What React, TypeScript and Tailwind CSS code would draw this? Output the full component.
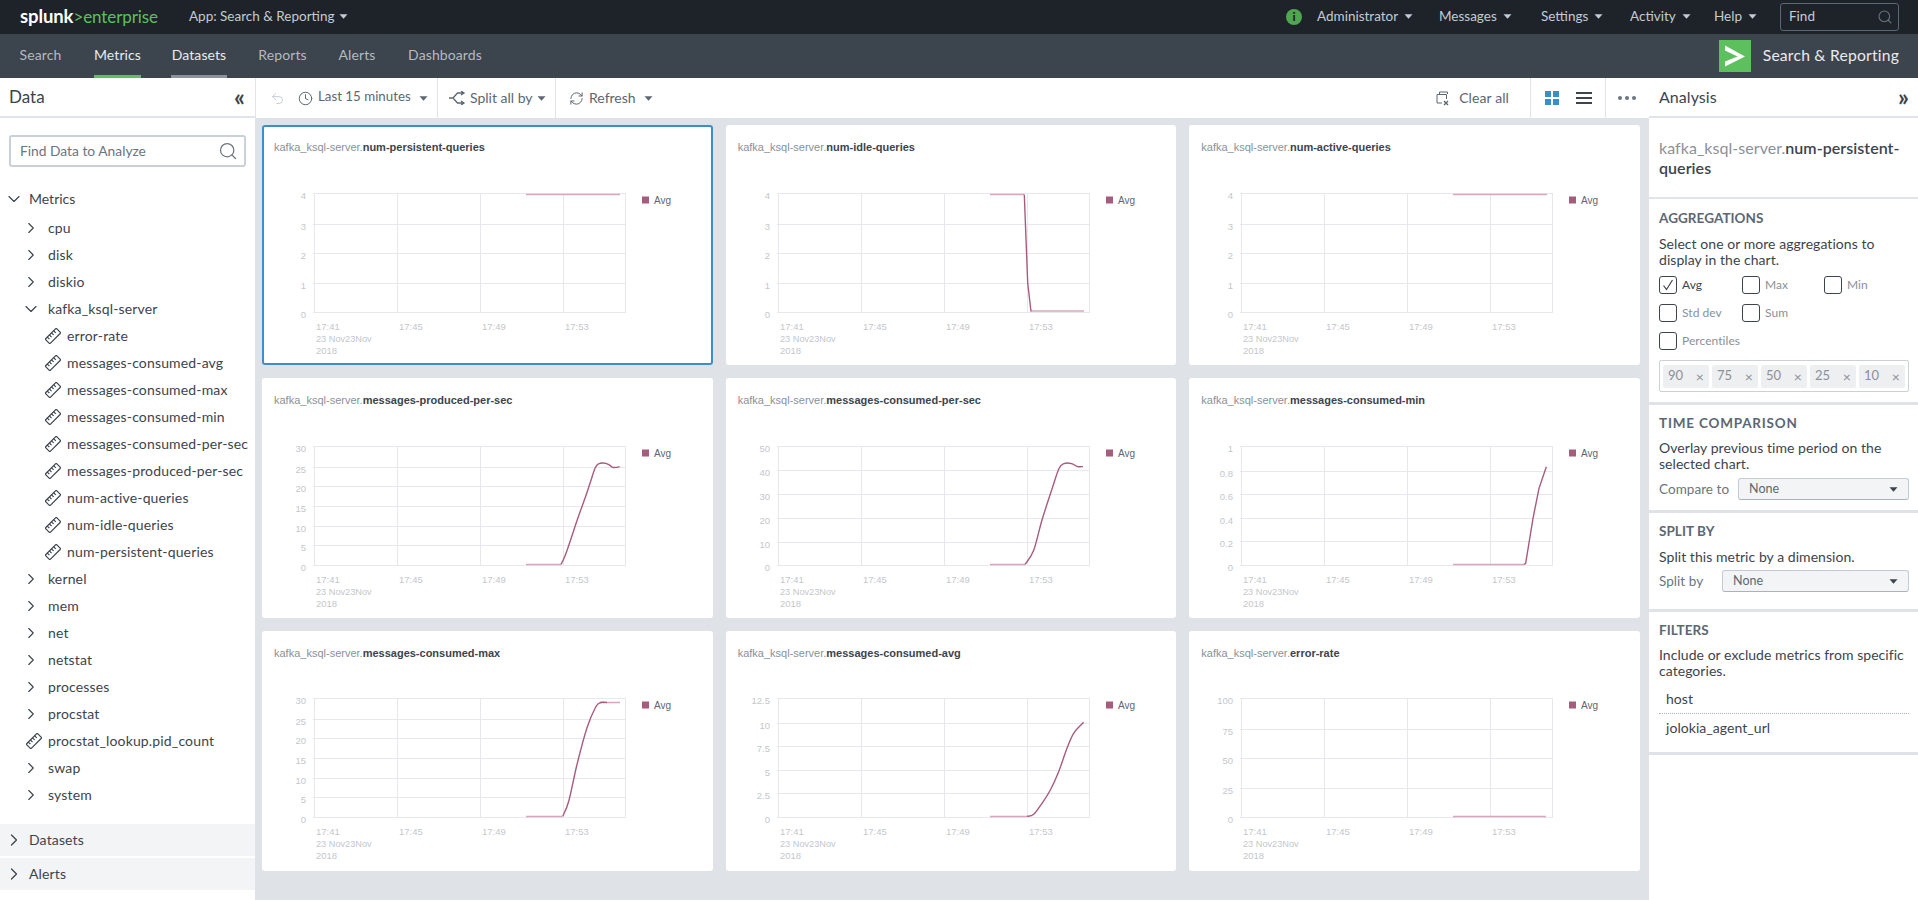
import { ChevronDown, ChevronRight, Clock, RefreshCw, Search, Undo2 } from 'lucide-react';

type Pt = [number, number];

// turn a point list into a soft curve, the charts are spline charts
function smooth(p: Pt[]) {
  let d = `M${p[0][0]} ${p[0][1]}`;
  for (let i = 0; i < p.length - 1; i++) {
    const a = p[Math.max(i - 1, 0)];
    const b = p[i];
    const c = p[i + 1];
    const e = p[Math.min(i + 2, p.length - 1)];
    d += `C${b[0] + (c[0] - a[0]) / 6} ${b[1] + (c[1] - a[1]) / 6} ${c[0] - (e[0] - b[0]) / 6} ${c[1] - (e[1] - b[1]) / 6} ${c[0]} ${c[1]}`;
  }
  return d;
}

const zoomPts = (z: Pt[], ox: number, oy: number): Pt[] => z.map(([x, y]) => [x / 3 + ox, y / 3 + oy]);

const g7a = [68, 89, 108, 128, 148, 167, 187];
const g7b = [67, 88, 107, 127, 147, 166, 186];

const charts = [
  { name: 'num-persistent-queries', labels: ['4', '3', '2', '1', '0'], grid: [68, 99, 128, 158, 187], flat: [[264, 69.5, 358]], selected: true },
  {
    name: 'num-idle-queries', labels: ['4', '3', '2', '1', '0'], grid: [68, 99, 128, 158, 187],
    flat: [[264, 69.5, 298], [305, 186, 358]],
    straight: [[298.3, 69.5], [301.7, 158], [305, 186.5]] as Pt[],
  },
  { name: 'num-active-queries', labels: ['4', '3', '2', '1', '0'], grid: [68, 99, 128, 158, 187], flat: [[264, 69.5, 358]] },
  {
    name: 'messages-produced-per-sec', labels: ['30', '25', '20', '15', '10', '5', '0'], grid: g7a,
    flat: [[264, 186.5, 299]],
    curve: zoomPts([[903, 568], [912, 550], [925, 515], [940, 470], [955, 425], [975, 370], [990, 325], [1005, 280], [1015, 267], [1030, 264], [1045, 268], [1058, 277], [1070, 277], [1079, 275]], -2, -3),
  },
  {
    name: 'messages-consumed-per-sec', labels: ['50', '40', '30', '20', '10', '0'], grid: [68, 92, 116, 140, 164, 187],
    flat: [[264, 186.5, 299]],
    curve: [[299, 186.5], [307.6, 172.5], [316, 142], [326, 111], [333, 90.5], [338, 85.6], [345.5, 85.6], [351.6, 88.6], [357, 88.6]] as Pt[],
  },
  {
    name: 'messages-consumed-min', labels: ['1', '0.8', '0.6', '0.4', '0.2', '0'], grid: [68, 93, 116, 140, 163, 187],
    flat: [[264, 186.5, 335]],
    straight: zoomPts([[1003, 568], [1008, 565], [1030, 430], [1048, 340], [1070, 275]], 0.67, -3),
  },
  {
    name: 'messages-consumed-max', labels: ['30', '25', '20', '15', '10', '5', '0'], grid: g7b,
    flat: [[264, 185.5, 300], [338, 71.5, 358]],
    curve: [[300.7, 185.5], [306.8, 170], [315, 133.5], [325, 96.8], [333.7, 76], [338.6, 71.5], [345, 71.5]] as Pt[],
  },
  {
    name: 'messages-consumed-avg', labels: ['12.5', '10', '7.5', '5', '2.5', '0'], grid: [67, 92, 115, 139, 162, 186],
    flat: [[264, 185.5, 301]],
    curve: zoomPts([[905, 559], [925, 553], [950, 520], [975, 480], [1000, 425], [1025, 355], [1045, 310], [1075, 277]], -0.67, -1),
  },
  { name: 'error-rate', labels: ['100', '75', '50', '25', '0'], grid: [67, 98, 127, 157, 186], flat: [[264, 185.5, 357]] },
];

function Chart({ c }: { c: (typeof charts)[number] }) {
  const top = c.grid[0];
  const bottom = c.grid[c.grid.length - 1];
  return (
    <svg viewBox="0 44 451 196" className="block w-[451px] h-[196px] font-['Liberation_Sans',sans-serif]">
      {c.grid.map((y) => (
        <line key={y} x1={51} x2={364} y1={y + 0.5} y2={y + 0.5} stroke="#e6e8ee" />
      ))}
      {[52, 135, 218, 301, 363].map((x) => (
        <line key={x} x1={x + 0.5} x2={x + 0.5} y1={top} y2={bottom + 1} stroke="#e6e8ee" />
      ))}
      {c.labels.map((l, i) => (
        <text key={l} x={44} y={c.grid[i] + 5.5} textAnchor="end" fontSize={9.5} fill="#c4c7cb">{l}</text>
      ))}
      {[54, 137, 220, 303].map((x, i) => (
        <text key={x} x={x} y={bottom + 18} fontSize={9.5} fill="#c4c7cb">{['17:41', '17:45', '17:49', '17:53'][i]}</text>
      ))}
      <text x={54} y={bottom + 30} fontSize={9.2} fill="#c4c7cb">23 Nov23Nov</text>
      <text x={54} y={bottom + 42} fontSize={9.5} fill="#c4c7cb">2018</text>
      {c.flat.map(([x1, y, x2]) => (
        <line key={x1} x1={x1} x2={x2} y1={y} y2={y} stroke="#d8a9bd" strokeWidth={1.4} />
      ))}
      {c.curve && <path d={smooth(c.curve)} fill="none" stroke="#a65c7d" strokeWidth={1.4} />}
      {c.straight && <polyline points={c.straight.map((p) => p.join(',')).join(' ')} fill="none" stroke="#a65c7d" strokeWidth={1.4} />}
      <rect x={380} y={top + 3.5} width={7} height={7} fill="#a65c7d" />
      <text x={392} y={top + 11} fontSize={10} fill="#5c6773">Avg</text>
    </svg>
  );
}

function Caret({ className = 'text-[#c3cbd4]' }: { className?: string }) {
  return (
    <svg width="9" height="5" viewBox="0 0 9 5" className={className}>
      <path d="M0.5 0.3h8L4.5 4.8Z" fill="currentColor" />
    </svg>
  );
}

function RulerIcon() {
  return (
    <svg width="16" height="16" viewBox="0 0 16 16" fill="none" stroke="#3c444d" strokeWidth="1.2" className="shrink-0">
      <g transform="rotate(-45 8 8)">
        <rect x="0.2" y="4.7" width="15.6" height="6.6" rx="1" />
        <path d="M3.2 4.7v3M6.2 4.7v3M9.2 4.7v3M12.2 4.7v3" />
      </g>
    </svg>
  );
}

const topMenu = [
  { label: 'Administrator', w: 'w-[122px]' },
  { label: 'Messages', w: 'w-[102px]' },
  { label: 'Settings', w: 'w-[89px]' },
  { label: 'Activity', w: 'w-[84px]' },
  { label: 'Help', w: 'w-[66px]' },
];

const navItems = [
  { label: 'Search', w: 'w-[47px]' },
  { label: 'Metrics', w: 'w-[47px]', bar: 'border-[#5cc05c]', active: true },
  { label: 'Datasets', w: 'w-[56px]', bar: 'border-[#8b9299]', active: true },
  { label: 'Reports', w: 'w-[51px]' },
  { label: 'Alerts', w: 'w-[38px]' },
  { label: 'Dashboards', w: 'w-[78px]' },
];

const metrics = [
  'error-rate',
  'messages-consumed-avg',
  'messages-consumed-max',
  'messages-consumed-min',
  'messages-consumed-per-sec',
  'messages-produced-per-sec',
  'num-active-queries',
  'num-idle-queries',
  'num-persistent-queries',
];

function Group({ label }: { label: string }) {
  return (
    <div className="flex h-[27px] items-center pl-[22px]">
      <ChevronRight size={18} strokeWidth={1.5} className="shrink-0 text-[#3c444d]" />
      <span className="ml-[8px]">{label}</span>
    </div>
  );
}

function Check({ label, checked, w }: { label: string; checked?: boolean; w: string }) {
  return (
    <div className={`flex items-center ${w}`}>
      <span className="flex h-[18px] w-[18px] items-center justify-center rounded-[3px] border border-[#3c444d]">
        {checked && (
          <svg width="12" height="12" viewBox="0 0 12 12" fill="none" stroke="#3c444d" strokeWidth="1.2">
            <path d="M1.5 6.5 4.5 10.5 10.5 1" />
          </svg>
        )}
      </span>
      <span className={`ml-[5px] text-[12px] ${checked ? 'text-[#3c444d]' : 'text-[#8a9199]'}`}>{label}</span>
    </div>
  );
}

function SelectBox({ w }: { w: string }) {
  return (
    <div className={`flex h-[22px] items-center justify-between rounded-[3px] border border-[#c3cbd4] border-b-[#aab2bb] bg-[#f2f4f5] pl-[10px] pr-[10px] text-[12.5px] text-[#5c6773] ${w}`}>
      <span>None</span>
      <Caret className="text-[#3c444d]" />
    </div>
  );
}

export default function App() {
  return (
    <div className="flex h-[900px] w-[1918px] flex-col overflow-hidden bg-white font-['Lato',sans-serif] text-[14px] text-[#3c444d]">
      {/* top bar */}
      <div className="flex h-[34px] shrink-0 items-center bg-[#1e2329] text-[#c3cbd4]">
        <div className="w-[189px] pb-[2px] pl-[20px] text-[17px] leading-none tracking-[-0.1px]">
          <span className="text-[18.5px] font-bold text-white">splunk</span>
          <span className="font-normal text-[#5cc05c]">&gt;enterprise</span>
        </div>
        <div className="flex items-center pb-[2px] text-[13.5px]">
          App: Search &amp; Reporting
          <Caret className="ml-[4px] text-[#c3cbd4]" />
        </div>
        <div className="ml-auto flex items-center pr-[19px] text-[13.5px]">
          <div className="w-[31px]">
            <span className="flex h-[16px] w-[16px] items-center justify-center rounded-full bg-[#4fa64f] text-[12px] font-black leading-none text-[#1e2329]">i</span>
          </div>
          {topMenu.map((m) => (
            <div key={m.label} className={`flex items-center pb-[2px] ${m.w}`}>
              {m.label}
              <Caret className="ml-[6px]" />
            </div>
          ))}
          <div className="flex h-[28px] w-[119px] items-center justify-between rounded-[3px] border border-[#5c6773] pl-[8px] pr-[5px]">
            <span className="mb-[2px]">Find</span>
            <Search size={16} strokeWidth={1.6} className="text-[#6b7580]" />
          </div>
        </div>
      </div>

      {/* app nav */}
      <div className="flex h-[44px] shrink-0 bg-[#3c444d] pl-[17px] tracking-[0.1px] text-[#b5bac0]">
        <div className="flex gap-[30px]">
          {navItems.map((n) => (
            <div
              key={n.label}
              className={`flex h-[44px] items-center justify-center whitespace-nowrap border-b-[3px] ${n.w} ${n.bar ?? 'border-transparent'} ${n.active ? 'text-[#e9ebed]' : ''}`}
            >
              {n.label}
            </div>
          ))}
        </div>
        <div className="ml-auto flex items-center pr-[19px]">
          <svg width="32" height="32" viewBox="0 0 32 32">
            <rect width="32" height="32" fill="#5cc05c" />
            <path d="M6 5.5 26 16.5 6 26.5V21.5L18.5 16.5 6 10.5Z" fill="#fff" />
          </svg>
          <span className="ml-[12px] text-[15.7px] tracking-[0.2px] text-[#e9ebed]">Search &amp; Reporting</span>
        </div>
      </div>

      <div className="flex min-h-0 flex-1">
        {/* left panel */}
        <aside className="flex w-[255px] shrink-0 flex-col">
          <div className="flex h-[40px] shrink-0 items-center justify-between border-b-2 border-[#e1e4e8] pl-[9px] pr-[10px]">
            <span className="text-[17px]">Data</span>
            <span className="text-[24px] font-bold leading-none">«</span>
          </div>
          <div className="mx-[9px] mt-[17px] flex h-[32px] shrink-0 items-center justify-between rounded-[3px] border-2 border-[#c9d0d8] pl-[9px] pr-[6px] text-[13.8px] text-[#6b7580]">
            <span>Find Data to Analyze</span>
            <Search size={20} strokeWidth={1.5} />
          </div>
          <div className="mt-[18px] flex h-[27px] shrink-0 items-center pl-[4px]">
            <ChevronDown size={20} strokeWidth={1.4} />
            <span className="ml-[5px]">Metrics</span>
          </div>
          <div className="mt-[2px] tracking-[0.15px]">
            <Group label="cpu" />
            <Group label="disk" />
            <Group label="diskio" />
            <div className="flex h-[27px] items-center pl-[21px]">
              <ChevronDown size={20} strokeWidth={1.4} className="shrink-0" />
              <span className="ml-[7px]">kafka_ksql-server</span>
            </div>
            {metrics.map((m) => (
              <div key={m} className="flex h-[27px] items-center pl-[45px]">
                <RulerIcon />
                <span className="ml-[6px] whitespace-nowrap">{m}</span>
              </div>
            ))}
            <Group label="kernel" />
            <Group label="mem" />
            <Group label="net" />
            <Group label="netstat" />
            <Group label="processes" />
            <Group label="procstat" />
            <div className="flex h-[27px] items-center pl-[26px]">
              <RulerIcon />
              <span className="ml-[6px]">procstat_lookup.pid_count</span>
            </div>
            <Group label="swap" />
            <Group label="system" />
          </div>
          <div className="mt-[16px] flex h-[32px] shrink-0 items-center bg-[#f2f4f5] pl-[4px]">
            <ChevronRight size={20} strokeWidth={1.5} />
            <span className="mb-[2px] ml-[5px] tracking-[0.15px]">Datasets</span>
          </div>
          <div className="mt-[2px] flex h-[32px] shrink-0 items-center bg-[#f2f4f5] pl-[4px]">
            <ChevronRight size={20} strokeWidth={1.5} />
            <span className="mb-[2px] ml-[5px] tracking-[0.15px]">Alerts</span>
          </div>
        </aside>

        {/* charts */}
        <main className="flex min-w-0 flex-1 flex-col bg-[#dfe3e7]">
          <div className="flex h-[40px] shrink-0 items-center border-l border-[#e1e4e8] bg-white text-[#5c6773]">
            <div className="flex h-full w-[182px] items-center border-r border-[#e1e4e8] pl-[14px]">
              <Undo2 size={15} strokeWidth={1.5} className="text-[#c3cbd4]" />
              <Clock size={15} strokeWidth={1.6} className="ml-[13px]" />
              <span className="mb-[2px] ml-[5px] whitespace-nowrap text-[13.3px]">Last 15 minutes</span>
              <Caret className="ml-[8px] text-[#5c6773]" />
            </div>
            <div className="flex h-full w-[118px] items-center border-r border-[#e1e4e8] pl-[11px]">
              <svg width="17" height="14" viewBox="0 0 17 14" fill="none" stroke="#5c6773" strokeWidth="1.3">
                <path d="M0 7h4l4.5-5H14M4 7l4.5 5H14M12 0l3 2-3 2M12 10l3 2-3 2" />
              </svg>
              <span className="mb-[2px] ml-[4px] whitespace-nowrap">Split all by</span>
              <Caret className="ml-[4px] text-[#5c6773]" />
            </div>
            <div className="flex h-full items-center pl-[13px]">
              <RefreshCw size={15} strokeWidth={1.6} />
              <span className="mb-[2px] ml-[5px]">Refresh</span>
              <Caret className="ml-[8px] text-[#5c6773]" />
            </div>
            <div className="ml-auto flex h-full items-center pr-[21px]">
              <svg width="14" height="15" viewBox="0 0 14 15" fill="none" stroke="#5c6773" strokeWidth="1">
                <path d="M3.5 3V1h8v2M1 3.5h9.5V8M1 3.5V12h5" />
                <path d="M8 10l4 4M12 10l-4 4" strokeWidth="1.4" />
              </svg>
              <span className="mb-[2px] ml-[9px] tracking-[0.1px]">Clear all</span>
            </div>
            <div className="flex h-full w-[75px] items-center gap-[17px] border-l border-[#e1e4e8] pl-[14px]">
              <div className="grid h-[14px] w-[14px] grid-cols-2 gap-[2px]">
                <span className="bg-[#3c8ec9]" />
                <span className="bg-[#3c8ec9]" />
                <span className="bg-[#3c8ec9]" />
                <span className="bg-[#3c8ec9]" />
              </div>
              <div className="flex w-[16px] flex-col gap-[3px]">
                <span className="h-[2px] bg-[#3c444d]" />
                <span className="h-[2px] bg-[#3c444d]" />
                <span className="h-[2px] bg-[#3c444d]" />
              </div>
            </div>
            <div className="flex h-full w-[44px] items-center justify-center gap-[3px] border-l border-[#e1e4e8] pr-[2px]">
              <span className="h-[4px] w-[4px] rounded-full bg-[#6b7580]" />
              <span className="h-[4px] w-[4px] rounded-full bg-[#6b7580]" />
              <span className="h-[4px] w-[4px] rounded-full bg-[#6b7580]" />
            </div>
          </div>
          <div className="grid grid-cols-3 gap-[13px] pl-[7px] pr-[9px] pt-[7px]">
            {charts.map((c) => (
              <div key={c.name} className={`h-[240px] overflow-hidden rounded-[3px] bg-white ${c.selected ? 'ring-2 ring-inset ring-[#3c8ec9]' : ''}`}>
                <div className="h-[44px] pl-[12px] pt-[15px] font-['Liberation_Sans',sans-serif] text-[11px] leading-[14px] text-[#8a9199]">
                  kafka_ksql-server.<span className="font-bold text-[#3c444d]">{c.name}</span>
                </div>
                <Chart c={c} />
              </div>
            ))}
          </div>
        </main>

        {/* right panel */}
        <aside className="w-[269px] shrink-0 text-[14px] tracking-[0.05px]">
          <div className="flex h-[40px] items-center justify-between border-b-2 border-[#e1e4e8] pl-[10px] pr-[9px]">
            <span className="text-[16px]">Analysis</span>
            <span className="text-[24px] font-bold leading-none">»</span>
          </div>
          <div className="h-[81px] border-b-2 border-[#e1e4e8] pl-[10px] pr-[4px] pt-[20px] text-[16px] leading-[20px]">
            <span className="text-[#8a9199]">kafka_ksql-server.</span>
            <span className="font-semibold">num-persistent-queries</span>
          </div>
          <div className="h-[206px] border-b-[3px] border-[#dfe3e7] pl-[10px] pr-[9px] pt-[10px]">
            <h3 className="text-[13.5px] font-bold leading-[18px] text-[#5c6773]">AGGREGATIONS</h3>
            <p className="mt-[9px] leading-[16px]">Select one or more aggregations to display in the chart.</p>
            <div className="mt-[8px] flex h-[18px]">
              <Check label="Avg" checked w="w-[83px]" />
              <Check label="Max" w="w-[82px]" />
              <Check label="Min" w="w-[60px]" />
            </div>
            <div className="mt-[10px] flex h-[18px]">
              <Check label="Std dev" w="w-[83px]" />
              <Check label="Sum" w="w-[82px]" />
            </div>
            <div className="mt-[10px] flex h-[18px]">
              <Check label="Percentiles" w="w-[100px]" />
            </div>
            <div className="mt-[10px] flex h-[32px] items-center gap-[3px] rounded-[2px] border border-[#c9d0d8] pl-[3px] text-[13px] text-[#8a9199]">
              {['90', '75', '50', '25', '10'].map((v) => (
                <span key={v} className="flex h-[23px] w-[46px] items-center justify-between rounded-[2px] bg-[#eeeff0] pl-[5px] pr-[5px]">
                  {v}
                  <span className="text-[14px]">×</span>
                </span>
              ))}
            </div>
          </div>
          <div className="h-[108px] border-b-[3px] border-[#dfe3e7] pl-[10px] pr-[9px] pt-[9px]">
            <h3 className="text-[13.5px] font-bold leading-[18px] tracking-[0.8px] text-[#5c6773]">TIME COMPARISON</h3>
            <p className="mt-[8px] leading-[16px]">Overlay previous time period on the selected chart.</p>
            <div className="mt-[6px] flex items-center justify-between text-[13.5px] text-[#6b7580]">
              <span>Compare to</span>
              <SelectBox w="w-[171px]" />
            </div>
          </div>
          <div className="h-[99px] border-b-[3px] border-[#dfe3e7] pl-[10px] pr-[9px] pt-[9px]">
            <h3 className="text-[13.5px] font-bold leading-[18px] text-[#5c6773]">SPLIT BY</h3>
            <p className="mt-[9px] leading-[16px]">Split this metric by a dimension.</p>
            <div className="mt-[5px] flex items-center justify-between text-[13.5px] text-[#6b7580]">
              <span>Split by</span>
              <SelectBox w="w-[187px]" />
            </div>
          </div>
          <div className="h-[143px] border-b-[3px] border-[#dfe3e7] pl-[10px] pr-[9px] pt-[9px]">
            <h3 className="text-[13.5px] font-bold leading-[18px] text-[#5c6773]">FILTERS</h3>
            <p className="mt-[8px] leading-[16px]">Include or exclude metrics from specific categories.</p>
            <div className="mt-[6px] flex h-[29px] items-center border-b border-dotted border-[#aab2bb] pb-[2px] pl-[7px]">host</div>
            <div className="flex h-[29px] items-center pb-[2px] pl-[7px]">jolokia_agent_url</div>
          </div>
        </aside>
      </div>
    </div>
  );
}
